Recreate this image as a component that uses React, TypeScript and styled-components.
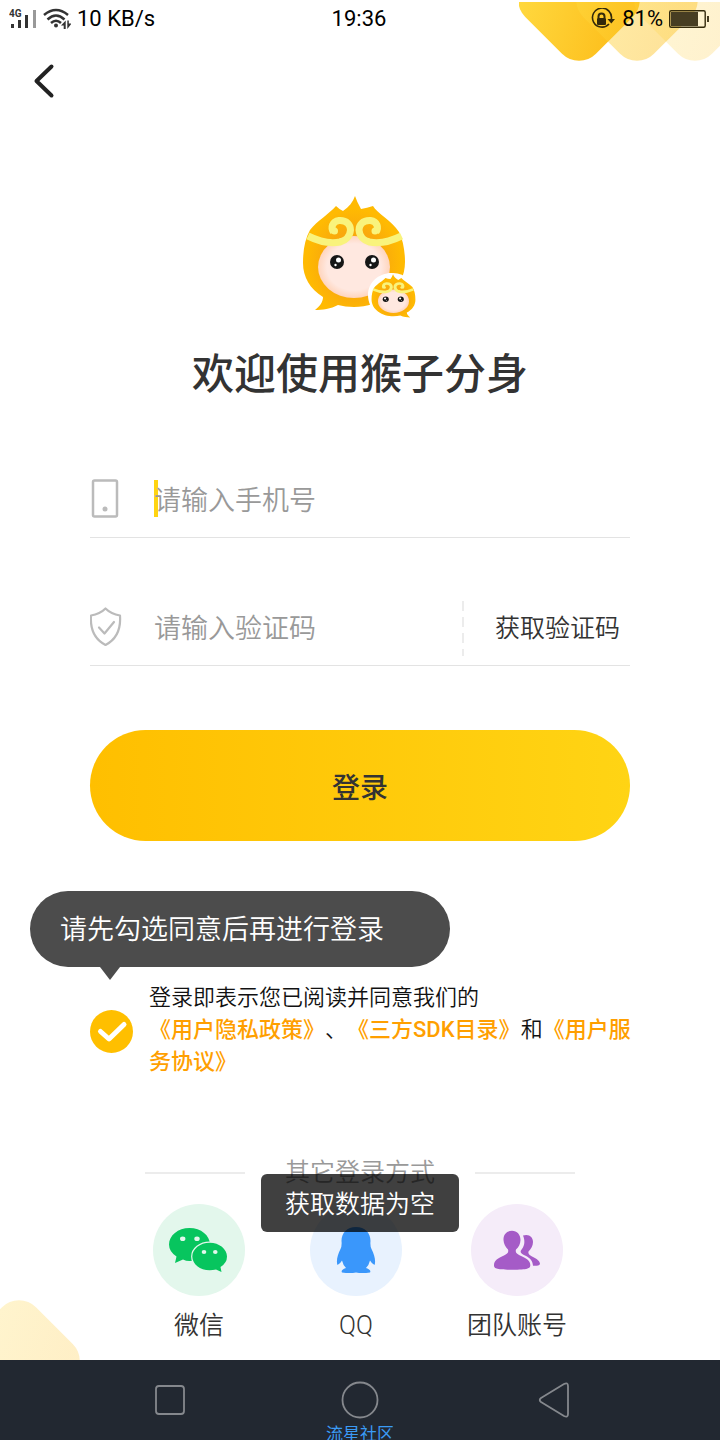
import React from "react";
import styled, { createGlobalStyle, css } from "styled-components";

const sans = 'Roboto, "Noto Sans CJK SC", sans-serif';
const bookWeight = 350;

const GlobalStyle = createGlobalStyle`
  *, *::before, *::after { box-sizing: border-box; }
  body { margin: 0; background: #fff; color: #333; font-family: ${sans}; }
  button, input { font-family: inherit; color: inherit; }
`;

const Screen = styled.div`
  position: relative;
  display: flex;
  flex-direction: column;
  min-height: 100vh;
  overflow: hidden;
`;

const CornerArt = styled.svg<{ $corner: "top" | "bottom" }>`
  position: absolute;
  z-index: -1;
  ${({ $corner }) => ($corner === "top" ? css`top: 2px; right: 0;` : css`bottom: 0; left: 0;`)}
`;

const StatusBar = styled.header`
  display: grid;
  grid-template-columns: 1fr auto 1fr;
  align-items: center;
  height: 37px;
  padding: 0 11px 0 9px;
  color: #000;
  font-size: 22px;
  line-height: 37px;
`;

const StatusGroup = styled.div<{ $end?: boolean }>`
  display: flex;
  align-items: center;
  gap: 6px;
  justify-content: ${({ $end }) => ($end ? "flex-end" : "flex-start")};
`;

const TopBar = styled.nav`
  display: flex;
  align-items: center;
  height: 88px;
  padding: 0 24px;
`;

const IconButton = styled.button`
  display: grid;
  place-items: center;
  width: 40px;
  height: 40px;
  padding: 0;
  border: 0;
  background: none;
`;

const Content = styled.main`
  display: flex;
  flex-direction: column;
  flex: 1;
  padding-top: 60px;
`;

const Logo = styled.svg`
  align-self: center;
`;

const Title = styled.h1`
  margin: 15px 0 55px;
  font-size: 42px;
  line-height: 60px;
  font-weight: 500;
  text-align: center;
`;

const Form = styled.form`
  display: flex;
  flex-direction: column;
`;

const Fields = styled.div`
  display: flex;
  flex-direction: column;
  gap: 50px;
  padding: 0 90px;
`;

const Field = styled.div`
  display: flex;
  align-items: center;
  height: 78px;
  border-bottom: 1px solid #e3e3e3;
`;

const FieldIcon = styled.label`
  display: flex;
  width: 64px;
`;

const InputWrap = styled.div`
  position: relative;
  flex: 1;
  min-width: 0;
`;

const Caret = styled.span`
  position: absolute;
  top: 1px;
  left: 0;
  width: 4px;
  height: 37px;
  background: #ffd411;
`;

const Input = styled.input`
  position: relative;
  display: block;
  width: 100%;
  height: 40px;
  padding: 4px 0 0;
  border: 0;
  outline: 0;
  background: transparent;
  font-size: 27px;
  font-weight: ${bookWeight};
  &::placeholder { color: #999; opacity: 1; }
`;

const Dashes = styled.span`
  width: 2px;
  height: 55px;
  margin-top: 4px;
  background: repeating-linear-gradient(#ececec 0 10px, transparent 10px 16px);
`;

const CodeButton = styled.button`
  padding: 4px 10px 0 31px;
  border: 0;
  background: none;
  font-size: 25px;
  font-weight: ${bookWeight};
  line-height: 40px;
`;

const LoginButton = styled.button`
  height: 111px;
  margin: 64px 90px 50px;
  border: 0;
  border-radius: 56px;
  background: linear-gradient(90deg, #ffbf00, #ffd414);
  font-size: 28px;
  font-weight: 500;
`;

const Tip = styled.div`
  position: relative;
  align-self: flex-start;
  width: 420px;
  height: 76px;
  margin: 0 30px 14px;
  padding: 2px 30px 0;
  border-radius: 38px;
  background: #4c4c4c;
  color: #fff;
  font-size: 27px;
  font-weight: ${bookWeight};
  line-height: 74px;
  &::after {
    content: "";
    position: absolute;
    top: 100%;
    left: 70px;
    border: solid transparent;
    border-width: 13px 10px 0;
    border-top-color: #4c4c4c;
  }
`;

const Agreement = styled.div`
  display: flex;
  align-items: center;
  gap: 16px;
  padding: 0 86px 0 90px;
`;

const Check = styled.span`
  display: grid;
  flex: none;
  margin-top: 4px;
  & > * { grid-area: 1 / 1; }
  input { width: 43px; height: 43px; margin: 0; opacity: 0; }
`;

const Legal = styled.p`
  flex: 1;
  margin: 1px 0 0;
  font-size: 22px;
  font-weight: ${bookWeight};
  line-height: 32px;
  color: #111;
  text-spacing-trim: space-all;
`;

const LegalLink = styled.a`
  color: #ff9f00;
  font-weight: 500;
  text-decoration: none;
`;

const OtherLogin = styled.section`
  position: relative;
  margin-top: 78px;
  padding-bottom: 17px;
  font-size: 25px;
  font-weight: ${bookWeight};
  line-height: 34px;
`;

const Divider = styled.h2`
  display: flex;
  align-items: center;
  justify-content: center;
  gap: 40px;
  margin: 0 0 14px;
  color: #999;
  font-size: inherit;
  font-weight: inherit;
  &::before, &::after { content: ""; width: 100px; height: 2px; background: #ececec; }
`;

const Providers = styled.div`
  display: flex;
  justify-content: center;
  gap: 65px;
`;

const Provider = styled.button`
  display: flex;
  flex-direction: column;
  align-items: center;
  gap: 13px;
  padding: 0;
  border: 0;
  background: none;
  font-size: inherit;
  font-weight: inherit;
  line-height: inherit;
`;

const Toast = styled.div`
  position: absolute;
  top: 18px;
  left: 50%;
  transform: translateX(-50%);
  padding: 4px 24px 0;
  border-radius: 6px;
  background: rgba(0, 0, 0, 0.75);
  color: #fff;
  line-height: 54px;
  white-space: nowrap;
`;

const NavBar = styled.footer`
  position: relative;
  display: flex;
  align-items: center;
  justify-content: space-between;
  height: 80px;
  padding: 0 148px;
  background: #222831;
  overflow: hidden;
`;

const Watermark = styled.span`
  position: absolute;
  top: 64px;
  left: 50%;
  transform: translateX(-50%);
  color: #3b9bf5;
  font-size: 17px;
  line-height: 20px;
  white-space: nowrap;
`;

const Diamond = ({ x, y, opacity }: { x: number; y: number; opacity: number }) => (
  <rect x={x - 50} y={y - 50} width="100" height="100" rx="24" fill="url(#gold)" opacity={opacity}
    transform={`rotate(45 ${x} ${y})`} />
);

const GoldGradient = () => (
  <defs>
    <linearGradient id="gold" x1="0" y1="1" x2="1" y2="0.5">
      <stop offset="0.1" stopColor="#ffd83e" />
      <stop offset="1" stopColor="#fdc01e" />
    </linearGradient>
  </defs>
);

const SignalIcon = () => (
  <svg width="28" height="21" viewBox="9 7 28 21" fill="#333">
    <text x="9" y="16" fontSize="10" fontWeight="700">4G</text>
    <path d="M11 23h3v4h-3zM18 19h3v8h-3zM25 14h3v13h-3z" />
    <path d="M33 9h3v18h-3z" fill="#999" />
  </svg>
);

const WifiIcon = () => (
  <svg width="28" height="22" viewBox="43 8 28 22" fill="none" stroke="#333" strokeWidth="2.5">
    <path d="M44 15Q56 5 68 15M47.500 19.500Q56 11.500 64.500 19.500M51 23Q56 18.500 61 23" />
    <circle cx="56" cy="25.500" r="2" fill="#333" stroke="none" />
    <path d="M65.700 20.500v8.500h-2v-3.500h-2.700zM67.300 29v-8.500h1.500v3h2.700z" fill="#333" stroke="none" />
  </svg>
);

const RotationLockIcon = () => (
  <svg width="25" height="22" viewBox="590 7 25 22" fill="none" stroke="#33290a" strokeWidth="1.600">
    <path d="M608 23A9.500 9.500 0 1 1 610.300 18.500" />
    <path d="M606.500 18h7.500l-3.700 4.500z" fill="#33290a" stroke="none" />
    <path d="M597.500 17v-1.500a3 3 0 0 1 6 0V17" strokeWidth="2" />
    <rect x="596" y="17" width="9" height="7" rx="1" fill="#33290a" stroke="none" />
  </svg>
);

const BatteryIcon = () => (
  <svg width="40" height="18" viewBox="669 9 40 18" fill="none" stroke="#33290a" strokeWidth="1.400">
    <rect x="669.700" y="9.700" width="35.500" height="16.500" rx="1.500" />
    <path d="M671 11h27v14h-27zM707 15h2v6h-2z" fill="#473d22" stroke="none" />
  </svg>
);

const bandCurl = "M43.500 47C40.500 43 42 36.500 49 35.500C57 35 60.500 40 60.500 45C60 51 56 55.500 50 57C42 58.500 30 57 18 51";

const MonkeyHead = () => (
  <g>
    <path fill="url(#fur)" d="M13 78C13 65 15 54 20 45C27 36 39 29 46 21Q49 24 53 26C59 22 63 17 65 11Q67 17 71 24Q77 23 83 21C87 28 102 36 109 47C113 55 115 66 115 77C115 105 90 122 64 122Q55 122 48 120C41 124 32 125 25 125C30 121 33 117 33 112C20 104 13 92 13 78Z" />
    <ellipse cx="64" cy="82" rx="36" ry="31" fill="url(#skin)" />
    <g fill="none" stroke="#f9f37c" strokeWidth="7">
      <path d={bandCurl} />
      <path d={bandCurl} transform="matrix(-1 0 0 1 129.500 0)" />
    </g>
    <g fill="#f9f37c"><circle cx="44.500" cy="46" r="3.500" /><circle cx="85" cy="46" r="3.500" /></g>
    <g fill="#161616"><circle cx="47" cy="77" r="7" /><circle cx="82" cy="77" r="7" /></g>
    <g fill="#fff">
      <circle cx="48.500" cy="75" r="2.500" /><circle cx="45.500" cy="80" r="1.200" />
      <circle cx="83.500" cy="75" r="2.500" /><circle cx="80.500" cy="80" r="1.200" />
    </g>
  </g>
);

const MonkeyLogo = () => (
  <Logo width="140" height="145" viewBox="0 0 140 145" role="img" aria-label="猴子分身">
    <defs>
      <radialGradient id="fur" cx="0.5" cy="0.58" r="0.55">
        <stop offset="0.5" stopColor="#f9a90c" />
        <stop offset="0.85" stopColor="#ffba02" />
      </radialGradient>
      <radialGradient id="skin">
        <stop offset="0.75" stopColor="#ffe8e0" />
        <stop offset="1" stopColor="#ffd5bd" />
      </radialGradient>
    </defs>
    <MonkeyHead />
    <path fill="#fff" d="M102 88C88 88 78 98 78 110C78 124 90 134 103 134Q109 134 112 133L124 136Z" />
    <circle cx="103" cy="111" r="23" fill="#fff" />
    <g transform="translate(131 85) scale(-0.430 0.380)">
      <MonkeyHead />
    </g>
  </Logo>
);

const PhoneIcon = () => (
  <svg width="32" height="40" viewBox="0 0 32 40" fill="none" stroke="#bbb" strokeWidth="2.500">
    <rect x="3" y="1.500" width="24" height="36" rx="1.500" />
    <circle cx="15" cy="30" r="2.500" fill="#bbb" stroke="none" />
  </svg>
);

const ShieldIcon = () => (
  <svg width="32" height="40" viewBox="0 0 32 40" fill="none" stroke="#bbb" strokeWidth="2.200" strokeLinejoin="round" strokeLinecap="round">
    <path d="M15.500 1.500Q21 7 30 8.500C31 22 27 32 15.500 38C4 32 0 22 1 8.500Q10 7 15.500 1.500Z" />
    <path d="M9 20.500l5.500 6L24 15" />
  </svg>
);

const WechatIcon = () => (
  <svg width="92" height="92" viewBox="0 0 92 92">
    <circle cx="46" cy="46" r="46" fill="#e3f7ec" />
    <path fill="#07c55e" d="M36.500 24C25 24 16 31.500 16 40.500Q16 47.500 23.500 52.500L22 59L30 55.500Q33 57 36.500 57C48 57 57 49.500 57 40.500C57 31.500 48 24 36.500 24Z" />
    <path fill="#07c55e" stroke="#e3f7ec" strokeWidth="2.400" paintOrder="stroke" d="M56.700 38.700C47 38.700 39.300 45 39.300 52.500C39.300 60 47 66.300 56.700 66.300Q60 66.300 63 65.500L68.500 68L67.500 63Q74 59 74 52.500C74 45 66.300 38.700 56.700 38.700Z" />
    <g fill="#e3f7ec">
      <ellipse cx="29.700" cy="34.700" rx="2.700" ry="2.300" /><ellipse cx="44" cy="34.700" rx="2.700" ry="2.300" />
      <ellipse cx="51" cy="48" rx="2.300" ry="2" /><ellipse cx="62.300" cy="48" rx="2.300" ry="2" />
    </g>
  </svg>
);

const QQIcon = () => (
  <svg width="92" height="92" viewBox="0 0 92 92">
    <circle cx="46" cy="46" r="46" fill="#e8f2fe" />
    <path fill="#3a97fb" d="M46 23C37 23 31.500 29 31.500 37Q32 42 30.500 45C27.500 51 26 57 27.500 61Q30 60 32 56.500Q33 61 36 64C32 65.500 31 67 32 68.500Q40 69.500 46 68.500Q52 69.500 60 68.500C61 67 60 65.500 56 64Q59 61 60 56.500Q62 60 64.500 61C66 57 64.500 51 61.500 45Q60 42 60.500 37C60.500 29 55 23 46 23Z" />
  </svg>
);

const TeamIcon = () => (
  <svg width="92" height="92" viewBox="0 0 92 92">
    <circle cx="46" cy="46" r="46" fill="#f5ecf9" />
    <g fill="#a55bc7">
      <path d="M41 26.700C35.500 26.700 32.300 30.500 32.500 36C32.700 40 34.500 43 37 45.500C38 48.500 36 50 33 51.500C27 54 23 56.500 23 61C23 64.500 25 65.700 41 65.700C57 65.700 59.300 64.500 59.300 61C59.300 56.500 55 54 49 51.500C46 50 44 48.500 45 45.500C48 43 49.300 40 49.500 36C49.500 30.500 46 26.700 41 26.700Z" />
      <path d="M52 31.500C58 29.500 62 33 62 38C62 42 60 45 57.500 47.500C57 49.500 58 51 62 53C66 55 69 57 69 60C68 62 65 61.700 62 61.700C61.500 57 60 54.500 54 51.500C49.500 49.500 48.500 47.500 51 45C54 41 54 36 52 31.500Z" />
    </g>
  </svg>
);

const NavIcon = ({ d }: { d: string }) => (
  <svg width="40" height="40" viewBox="0 0 40 40" fill="none" stroke="#85888d" strokeWidth="1.800" strokeLinejoin="round">
    <path d={d} />
  </svg>
);

const providers = [
  { name: "微信", Icon: WechatIcon },
  { name: "QQ", Icon: QQIcon },
  { name: "团队账号", Icon: TeamIcon },
];

const navItems = [
  { name: "最近任务", d: "M11 6H33Q36 6 36 9V31Q36 34 33 34H11Q8 34 8 31V9Q8 6 11 6Z" },
  { name: "主页", d: "M20 2.500a17.500 17.500 0 1 1 0 35a17.500 17.500 0 1 1 0-35Z" },
  { name: "返回", d: "M32 4Q36 2 36 6V34Q36 38 32 36L9 22Q6.500 20 9 18Z" },
];

export default function App() {
  return (
    <>
      <GlobalStyle />
      <Screen>
        <CornerArt $corner="top" width="201" height="60" viewBox="519 2 201 60" aria-hidden="true">
          <GoldGradient />
          <Diamond x={579} y={0} opacity={1} />
          <Diamond x={637} y={0} opacity={0.45} />
          <Diamond x={695} y={0} opacity={0.22} />
        </CornerArt>

        <StatusBar>
          <StatusGroup>
            <SignalIcon />
            <WifiIcon />
            <span>10 KB/s</span>
          </StatusGroup>
          <span>19:36</span>
          <StatusGroup $end>
            <RotationLockIcon />
            <span>81%</span>
            <BatteryIcon />
          </StatusGroup>
        </StatusBar>

        <TopBar>
          <IconButton aria-label="返回">
            <svg width="24" height="36" viewBox="0 0 24 36" fill="none" stroke="#222" strokeWidth="4" strokeLinecap="round" strokeLinejoin="round">
              <path d="M19.500 3.500L4.500 18L19.500 32.500" />
            </svg>
          </IconButton>
        </TopBar>

        <Content>
          <MonkeyLogo />
          <Title>欢迎使用猴子分身</Title>
          <Form onSubmit={(e) => e.preventDefault()}>
            <Fields>
              <Field>
                <FieldIcon htmlFor="phone" aria-label="手机号"><PhoneIcon /></FieldIcon>
                <InputWrap>
                  <Caret />
                  <Input id="phone" type="tel" placeholder="请输入手机号" />
                </InputWrap>
              </Field>
              <Field>
                <FieldIcon htmlFor="code" aria-label="验证码"><ShieldIcon /></FieldIcon>
                <InputWrap>
                  <Input id="code" type="text" placeholder="请输入验证码" />
                </InputWrap>
                <Dashes />
                <CodeButton type="button">获取验证码</CodeButton>
              </Field>
            </Fields>
            <LoginButton type="submit">登录</LoginButton>
            <Tip role="status">请先勾选同意后再进行登录</Tip>
            <Agreement>
              <Check>
                <svg width="43" height="43" viewBox="0 0 43 43" fill="none" aria-hidden="true">
                  <circle cx="21.500" cy="21.500" r="21.500" fill="#ffbf00" />
                  <path d="M10.500 21.500l8.500 7.500L34 14.500" stroke="#fff" strokeWidth="5" strokeLinecap="round" strokeLinejoin="round" />
                </svg>
                <input id="agree" type="checkbox" defaultChecked aria-labelledby="legal" />
              </Check>
              <Legal id="legal">
                <label htmlFor="agree">登录即表示您已阅读并同意我们的</label>
                <br />
                <LegalLink href="#privacy">《用户隐私政策》</LegalLink>、<LegalLink href="#sdk">《三方SDK目录》</LegalLink>和<LegalLink href="#terms">《用户服务协议》</LegalLink>
              </Legal>
            </Agreement>
          </Form>

          <OtherLogin>
            <Divider>其它登录方式</Divider>
            <Providers>
              {providers.map(({ name, Icon }) => (
                <Provider key={name} type="button">
                  <Icon />
                  <span>{name}</span>
                </Provider>
              ))}
            </Providers>
            <Toast role="alert">获取数据为空</Toast>
            <CornerArt $corner="bottom" width="80" height="60" viewBox="0 1300 80 60" aria-hidden="true">
              <Diamond x={19} y={1361} opacity={0.25} />
            </CornerArt>
          </OtherLogin>
        </Content>

        <NavBar>
          {navItems.map(({ name, d }) => (
            <IconButton key={name} aria-label={name}><NavIcon d={d} /></IconButton>
          ))}
          <Watermark>流星社区</Watermark>
        </NavBar>
      </Screen>
    </>
  );
}
